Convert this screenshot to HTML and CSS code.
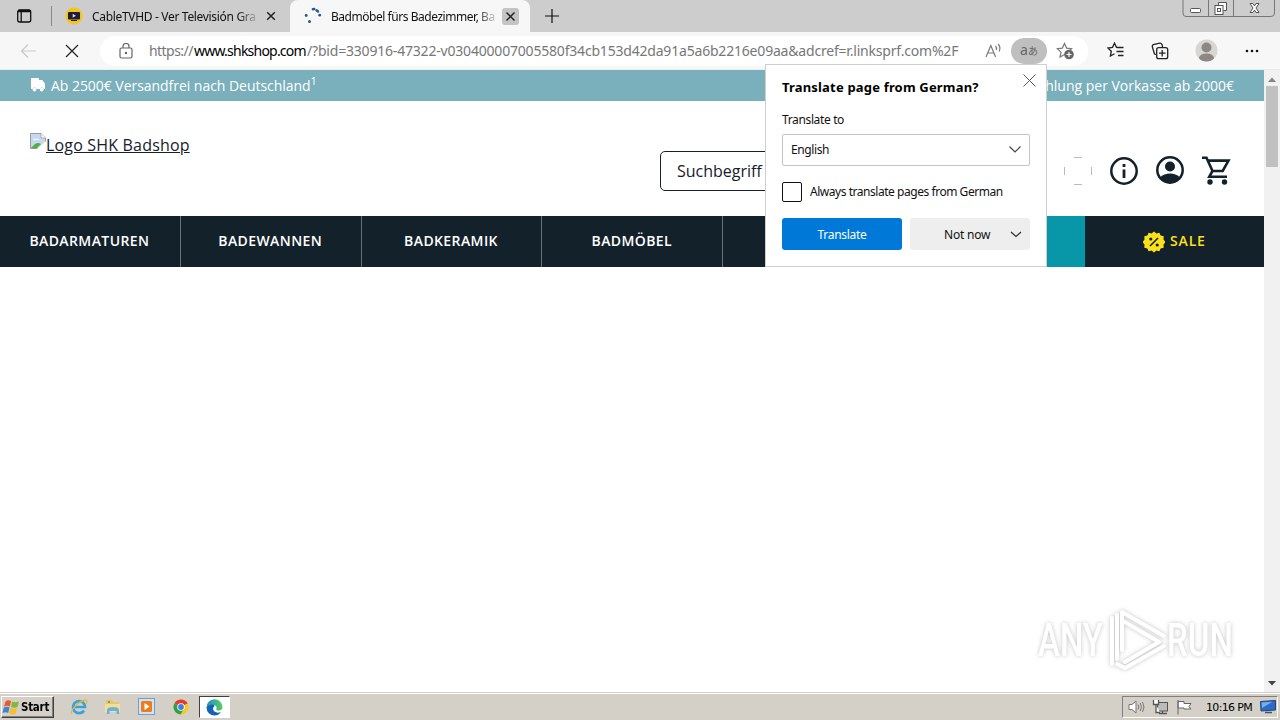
FILE: index.html
```html
<!DOCTYPE html>
<html lang="de">
<head>
<meta charset="utf-8">
<title>Badmöbel fürs Badezimmer</title>
<link rel="stylesheet" href="styles.css">
</head>
<body>
<div class="screen">
  <div class="tabstrip">
    <svg class="tab-actions" width="16" height="16" viewBox="0 0 16 16" fill="none" stroke="#111" stroke-width="1.3"><rect x="1.7" y="2" width="13" height="12" rx="2"/><path d="M2 3.6h12.5M5.2 4v10" /><path d="M2 2.8h12" stroke-width="2"/></svg>
    <span class="strip-line"></span>
    <div class="tab tab-idle">
      <svg width="18" height="18" viewBox="0 0 18 18"><circle cx="9" cy="9" r="8.5" fill="#f5c518"/><rect x="3" y="5" width="12" height="7.5" rx="1" fill="#1f1d3a"/><path d="M7.7 6.8v4l3.2-2z" fill="#d9d6ee"/><path d="M6 13.5h6" stroke="#1f1d3a"/></svg>
      <span class="tab-title t1">CableTVHD - Ver Televisión Gra</span>
      <svg class="close" width="16" height="16" viewBox="0 0 16 16" stroke="#222" stroke-width="1.5"><path d="M4.2 4.2l7.6 7.6M11.8 4.2l-7.6 7.6"/></svg>
    </div>
    <div class="tab tab-active">
      <svg width="18" height="18" viewBox="0 0 18 18" fill="#25598c"><circle cx="2.2" cy="8.5" r="1.4"/><circle cx="5.5" cy="14.5" r="1.5"/><circle cx="15.7" cy="8.2" r="1.4"/><path d="M8.8 2.2l1.4-.2M12.5 3.3l1.5 1.2" stroke="#25598c" stroke-width="2.4" stroke-linecap="round" fill="none"/></svg>
      <span class="tab-title t2">Badmöbel fürs Badezimmer, Ba</span>
      <svg class="close boxed" width="17" height="17" viewBox="0 0 17 17" stroke="#222" stroke-width="1.5"><path d="M4.5 4.5l8 8M12.5 4.5l-8 8"/></svg>
    </div>
    <svg class="plus" width="16" height="16" viewBox="0 0 16 16" stroke="#111" stroke-width="1.2"><path d="M8 1v14M1 8h14"/></svg>
    <svg class="winbtns" width="94" height="17" viewBox="0 0 94 17" fill="none" stroke="#555"><path d="M1 0v13q0 3.5 3 3.5h85q3.5 0 3.5-3.5V0M26.5 0v16M51.5 0v16" stroke="#777"/><rect x="8.5" y="8.5" width="10" height="4" rx="1" fill="#fff"/><path d="M36.5 5.5v-3h8v8h-3" fill="#fff"/><rect x="33" y="5.5" width="8" height="9" fill="#fff"/><rect x="35.5" y="8.5" width="3" height="3"/><path d="M68 3.5h3l1.5 2.5 1.5-2.5h3l-3 4.5 3 4.5h-3L72.5 10 71 12.5h-3l3-4.5z" fill="#fff"/></svg>
  </div>

  <div class="toolbar">
    <svg class="back" width="18" height="16" viewBox="0 0 18 16" fill="none" stroke="#c9c9c9" stroke-width="1.2"><path d="M16 8H1.5M8 1.5L1.5 8 8 14.5"/></svg>
    <svg class="stop" width="14" height="14" viewBox="0 0 14 14" stroke="#222" stroke-width="1.2"><path d="M1 1l12 12M13 1L1 13"/></svg>
    <div class="omnibox">
      <svg class="lock" width="14" height="16" viewBox="0 0 14 16" fill="none" stroke="#666" stroke-width="1.2"><rect x="1" y="5" width="12" height="10" rx="1.5"/><path d="M4 5V3.500a3 3 0 0 1 6 0V5"/><circle cx="7" cy="10" r=".6" fill="#666"/></svg>
      <div class="url"><span class="scheme">https://</span><span class="host">www.shkshop.com</span><span class="query">/?bid=330916-47322-v030400007005580f34cb153d42da91a5a6b2216e09aa&amp;adcref=r.linksprf.com%2F</span></div>
      <svg class="read" width="18" height="16" viewBox="0 0 18 16" fill="none" stroke="#777" stroke-width="1.2"><path d="M1 14L5.8 2.5 10.6 14M2.8 10h6M10.5 3q1.600 1.700.8 4M13.200 1q2.800 3 1 7.500"/></svg>
      <span class="trans">a<i>あ</i></span>
      <svg class="fav" width="20" height="18" viewBox="0 0 20 18"><path d="M8.500 1.500l2.100 4.600 5 .6-3.700 3.400 1 5-4.400-2.500L4 15.100l1-5L1.300 6.700l5-.6z" fill="none" stroke="#777" stroke-width="1.2"/><circle cx="13" cy="12.500" r="4.800" fill="#666"/><path d="M13 10v5M10.500 12.500h5" stroke="#fff" stroke-width="1.1"/></svg>
    </div>
    <svg class="favs" width="18" height="17" viewBox="0 0 18 17" fill="none" stroke="#222" stroke-width="1.3"><path d="M11 5.500L9.500 5.300 7.500 1.200 5.500 5.400l-4.600.6 3.400 3.200-.9 4.900 4.100-2.300M11 5.500h5.500M9.500 9.500h7M11 13.500h5.500"/></svg>
    <svg class="coll" width="18" height="18" viewBox="0 0 18 18" fill="none" stroke="#222" stroke-width="1.3"><rect x="5.700" y="5.700" width="11" height="11" rx="2"/><path d="M11.200 8v6.500M8 11.200h6.500M5 12.500L3.500 12 1.300 4.800Q1 3.300 2.300 2.700l6.500-1.500Q10.300 1 11 2.500l.6 2.500"/></svg>
    <svg class="avatar" width="23" height="23" viewBox="0 0 23 23"><defs><clipPath id="av"><circle cx="11.500" cy="11.500" r="11"/></clipPath></defs><g clip-path="url(#av)"><rect width="23" height="23" fill="#d8d5d2"/><circle cx="11.500" cy="8.500" r="5" fill="#8d8783"/><ellipse cx="11.500" cy="19" rx="7.500" ry="4.500" fill="#8d8783"/></g></svg>
    <svg class="dots" width="14" height="4" viewBox="0 0 14 4" fill="#111"><circle cx="2" cy="2" r="1.300"/><circle cx="7" cy="2" r="1.300"/><circle cx="12" cy="2" r="1.300"/></svg>
  </div>

  <div class="viewport">
    <main class="page">
      <div class="usp">
        <svg width="16" height="14" viewBox="0 0 16 14" fill="#fff"><path d="M1.500 0h7.300v2h3.400L15 5.500V11h-1.200a2.200 2.200 0 0 0-4.200 0H6.600a2.200 2.200 0 0 0-4.200 0H1V.5z"/><circle cx="4.500" cy="11.600" r="1.900"/><circle cx="11.700" cy="11.600" r="1.900"/></svg>
        <span class="usp-left">Ab 2500€ Versandfrei nach Deutschland<sup>1</sup></span>
        <span class="usp-right">hlung per Vorkasse ab 2000€</span>
      </div>
      <header class="head">
        <a class="logo"><svg width="16" height="16" viewBox="0 0 16 16"><path d="M.5.500H11L15.500 5v10.500H.5z" fill="#c6d8f2" stroke="#9a9a9a"/><path d="M11 .5V5h4.500" fill="#fff" stroke="#aaa"/><path d="M3 7q1-2 3-1 2-1 3 1z" fill="#fff"/><path d="M1 15l4-4q3-2 6 0l-4 4z" fill="#4fae45"/><path d="M7 16l9-8v8z" fill="#fff"/></svg><span>Logo SHK Badshop</span></a>
        <div class="search">Suchbegriff</div>
        <div class="head-icons">
          <svg width="28" height="28" viewBox="0 0 28 28" fill="none" stroke="#bbb" stroke-width="1"><path d="M10 .5h8M10 27.500h8M.5 10v8M27.500 10v8"/></svg>
          <svg width="28" height="28" viewBox="0 0 28 28" fill="none" stroke="#13212b" stroke-width="2.500"><circle cx="14" cy="14" r="12.700"/><path d="M14 12.500v8.500M14 7v3" stroke-width="2.800"/></svg>
          <svg width="28" height="28" viewBox="0 0 28 28"><circle cx="14" cy="14" r="12.700" fill="none" stroke="#13212b" stroke-width="2.500"/><circle cx="14" cy="10.500" r="5" fill="#13212b"/><path d="M4.500 21q3.500-3.500 9.500-3.500t9.500 3.500Q20 27 14 27t-9.500-6z" fill="#13212b"/></svg>
          <svg class="cart" width="30" height="29" viewBox="0 0 30 29" fill="none" stroke="#13212b" stroke-width="2.600"><path d="M1 1.800h4.500L11.500 15h10.200L27.500 4.600H7M11.500 15L8.300 20.700H26"/><circle cx="9" cy="26" r="2.700" fill="#13212b" stroke="none"/><circle cx="23.500" cy="26" r="2.700" fill="#13212b" stroke="none"/></svg>
        </div>
      </header>
      <nav class="nav">
        <a>BADARMATUREN</a><a>BADEWANNEN</a><a>BADKERAMIK</a><a>BADMÖBEL</a><a></a><a class="teal"></a>
        <a class="sale"><svg width="22" height="22" viewBox="0 0 22 22"><path fill="#fbe01c" d="M11 .5l2.400 2 3-.8 1.200 2.900 3.100.7-.2 3.200 2 2.500-2 2.500.2 3.200-3.100.7-1.200 2.900-3-.8-2.400 2-2.400-2-3 .8-1.200-2.900-3.100-.7.200-3.200-2-2.500 2-2.500-.2-3.200 3.100-.7 1.200-2.900 3 .8z"/><path d="M7 15l8-8" stroke="#13212b" stroke-width="1.600"/><circle cx="7.800" cy="8" r="1.600" fill="#13212b"/><circle cx="14.200" cy="14" r="1.600" fill="#13212b"/></svg><span>SALE</span></a>
      </nav>
    </main>
    <div class="scroll">
      <svg width="8" height="5" viewBox="0 0 8 5"><path d="M0 5l4-4.500L8 5z" fill="#858585"/></svg>
      <div class="thumb"></div>
      <svg class="down" width="8" height="5" viewBox="0 0 8 5"><path d="M0 0l4 4.500L8 0z" fill="#444"/></svg>
    </div>
  </div>

  <div class="taskbar">
    <div class="start"><svg width="19" height="17" viewBox="0 0 19 17"><path d="M3.500 2.500Q6 .5 9 2L7.800 7.500Q5 6 2 7.500z" fill="#e8592b"/><path d="M10 2.500q3 1.500 7 0l-1.500 5.500q-3.500 1.500-6.500 0z" fill="#83b93b"/><path d="M1.800 8.500q3-1.500 5.800 0L6.200 14Q3.500 12.500.5 14z" fill="#3f84cf"/><path d="M8.700 9q3 1.500 6.500 0l-1.400 5.500q-3.500 1.700-6.500 0z" fill="#f6bf2c"/></svg><b>Start</b></div>
    <svg class="ie" width="18" height="18" viewBox="0 0 18 18" fill="none"><path d="M14 12.500A6 6 0 1 1 15 9H4" stroke="#39a3e0" stroke-width="2.700"/><path d="M2 16C-1 13 10 2 16 2q2 1 0 4" stroke="#e5b93a" stroke-width="1.300"/></svg>
    <svg class="folder" width="18" height="18" viewBox="0 0 18 18"><path d="M2 2h6l1 2h6v9H2z" fill="#e9c766"/><path d="M1 6h15v8H1z" fill="#f5df93"/><path d="M3 16v-4q0-3 6-3t6 3v4h-2.500v-3h-7v3z" fill="#69b2df"/><path d="M4 3h2v2H4z" fill="#65a955"/></svg>
    <svg class="media" width="17" height="17" viewBox="0 0 17 17"><rect x=".5" y=".5" width="16" height="16" fill="#cfe3f7" stroke="#6e9fcd"/><rect x="3" y="3" width="11" height="11" rx="1.500" fill="#ee7d17"/><path d="M6.500 5v7l5-3.500z" fill="#fff"/></svg>
    <svg class="chrome" width="16" height="16" viewBox="0 0 16 16"><circle cx="8" cy="8" r="7.500" fill="#f9c91c"/><path d="M8 8L1.500 4.200A7.500 7.500 0 0 1 14.500 4.200z" fill="#e33b2e"/><path d="M8 8L1.500 4.200A7.500 7.500 0 0 0 7.500 15.500L11 9.500z" fill="#2da24b"/><path d="M8 4.500h6.600L13 3 8 2z" fill="#e33b2e"/><circle cx="8" cy="8" r="3.800" fill="#fff"/><circle cx="8" cy="8" r="2.900" fill="#3f7de8"/></svg>
    <div class="edge-btn"><svg width="17" height="17" viewBox="0 0 17 17"><defs><linearGradient id="eg"><stop offset="0" stop-color="#1f8fd6"/><stop offset="1" stop-color="#58cf55"/></linearGradient></defs><path d="M.5 8.500A8 8 0 0 1 16.500 8q0 3.500-4 3.500-3 0-2-2 .5-3-2.500-3.500-4-.5-7.500 2.500z" fill="url(#eg)"/><path d="M.5 8.500Q3 5 6.500 5.500 9 6 8.500 7q-3 3 0 5.500 2.500 2 6.500.5-2.500 3.500-6.500 3.500a8 8 0 0 1-8-8z" fill="#1263b4"/></svg></div>
    <div class="tray">
      <svg width="17" height="16" viewBox="0 0 17 16" fill="#fff" stroke="#777"><path d="M1 5.500h3L8 2v12l-4-3.500H1z"/><path d="M10 5.500q1.500 2.500 0 5M12.200 4q2.500 4 0 8M14.500 3q3 5 0 10" fill="none"/></svg>
      <svg width="17" height="16" viewBox="0 0 17 16" fill="#fff" stroke="#555"><rect x="5.500" y="3.500" width="10" height="8.500" fill="#bbb"/><path d="M7 14.500h8M10.500 12v2.500M1.500 1v4.500h5V1M4 5.500V13.500h4" stroke-width="1.300"/></svg>
      <svg width="17" height="16" viewBox="0 0 17 16" fill="#fff" stroke="#666"><path d="M2 1v14.500M2 2.500h6v2h7l-2 3 2 2.500H8V9H2z"/></svg>
      <span class="clock">10:16 PM</span>
      <svg width="16" height="14" viewBox="0 0 16 14"><path d="M.5 1.500L15.500.5v9.500L1 11z" fill="#2c6cc9" stroke="#27456f"/><path d="M1.500 2.500l11-.8L2 8z" fill="#74aef0"/><path d="M5 12.500h7" stroke="#3f546e" stroke-width="1.500"/></svg>
    </div>
  </div>

  <section class="popup">
    <div class="pop-head"><h1>Translate page from German?</h1><svg width="13" height="13" viewBox="0 0 13 13" stroke="#555"><path d="M.5.500l12 12M12.500.5l-12 12"/></svg></div>
    <label class="to">Translate to</label>
    <div class="select"><span>English</span><svg width="12" height="7" viewBox="0 0 12 7" fill="none" stroke="#444" stroke-width="1.200"><path d="M.5.500L6 6 11.500.5"/></svg></div>
    <div class="always"><span class="box"></span><span class="always-text">Always translate pages from German</span></div>
    <div class="btns"><button class="primary">Translate</button><button class="second"><span>Not now</span><svg width="12" height="7" viewBox="0 0 12 7" fill="none" stroke="#333" stroke-width="1.300"><path d="M1 1l5 4.500L11 1"/></svg></button></div>
  </section>

  <svg class="watermark" width="225" height="74" viewBox="0 0 225 74">
    <g class="wm-shape">
      <text x="7" y="52" textLength="65" lengthAdjust="spacingAndGlyphs">ANY</text>
      <text x="136" y="52" textLength="66" lengthAdjust="spacingAndGlyphs">RUN</text>
      <path d="M81 14v46M86 11v44M91 8v38M91 8l42 24M92 17l36 21-34 20M133 42L94 64M86 60l8 4" fill="none" stroke="#fff" stroke-width="4" stroke-linejoin="round" stroke-linecap="round"/>
    </g>
  </svg>
</div>
</body>
</html>
```

FILE: styles.css
```css
* { box-sizing: border-box; }
body { margin: 0; font-family: "Noto Sans", "Open Sans", sans-serif; }
svg { display: block; flex: none; }
.screen { position: relative; width: 1280px; height: 720px; overflow: hidden; background: #fff; display: flex; flex-direction: column; }

.tabstrip { height: 32px; background: #cdcdcd; display: flex; align-items: center; flex: none; }
.tab-actions { margin-left: 16px; }
.strip-line { width: 1px; height: 20px; background: #888; margin-left: 19px; }
.tab { height: 32px; display: flex; align-items: center; font-size: 12px; color: #111; }
.tab-idle { width: 238px; padding-left: 13px; }
.tab-active { width: 240px; padding-left: 14px; background: #f7f7f7; border-radius: 8px 8px 0 0; }
.tab-title { white-space: nowrap; -webkit-mask-image: linear-gradient(90deg, #000 88%, transparent 102%); mask-image: linear-gradient(90deg, #000 88%, transparent 102%); }
.t1 { width: 165px; margin-left: 9px; letter-spacing: -0.32px; }
.t2 { width: 165px; margin-left: 9px; letter-spacing: -0.46px; }
.close { margin-left: 6px; }
.boxed { background: #c4c4c4; border-radius: 3px; }
.plus { margin-left: 14px; }
.winbtns { margin-left: auto; margin-right: 4px; align-self: flex-start; }

.toolbar { height: 38px; background: #f7f7f7; border-bottom: 1px solid #ededed; display: flex; align-items: center; flex: none; }
.back { margin-left: 20px; }
.stop { margin-left: 27px; }
.omnibox { margin-left: 21px; width: 988px; height: 30px; border-radius: 15px; background: #fff; display: flex; align-items: center; }
.lock { margin-left: 19px; }
.url { margin-left: 16px; width: 815px; white-space: nowrap; font-size: 14px; color: #777; display: flex; }
.scheme { width: 45px; letter-spacing: -0.55px; }
.host { width: 113px; letter-spacing: -0.78px; color: #000; }
.query { letter-spacing: -0.195px; }
.read { margin-left: 21px; }
.trans { margin-left: 8px; width: 36px; height: 26px; border-radius: 13px; background: #bfbfbf; color: #666; font-size: 14px; line-height: 24px; text-align: center; }
.trans i { font: normal 10px "Noto Sans CJK JP", sans-serif; }
.fav { margin-left: 9px; }
.favs { margin-left: 19px; }
.coll { margin-left: 26px; }
.avatar { margin-left: 26px; }
.dots { margin-left: 27px; }

.viewport { height: 622px; display: flex; flex: none; }
.page { width: 1264px; color: #13212b; font-family: "Open Sans", "Noto Sans", sans-serif; }
.usp { height: 31px; background: #7aafbc; color: #fff; display: flex; align-items: center; padding: 0 30px 1px; font-size: 14px; }
.usp-left { margin-left: 5px; white-space: nowrap; letter-spacing: -0.04px; }
.usp sup { font-size: 11px; line-height: 0; }
.usp-right { margin-left: auto; white-space: nowrap; }
.head { height: 115px; display: flex; padding-left: 30px; }
.logo { display: flex; width: 630px; padding-top: 32px; font-size: 16px; letter-spacing: 0.18px; }
.logo span { text-decoration: underline; line-height: 25px; white-space: nowrap; }
.search { margin-top: 50px; width: 362px; height: 40px; border: 1px solid #13212b; border-radius: 5px; padding-left: 16px; line-height: 38px; font-size: 16px; }
.head-icons { margin-left: 42px; margin-top: 55px; display: flex; gap: 18px; }
.head-icons svg:nth-child(-n+2) { margin-top: 1px; }
.head-icons .cart { margin-left: -1px; }
.nav { height: 51px; background: #13212b; color: #fff; display: grid; grid-template-columns: repeat(6, 180.8px) 1fr; font-size: 14px; font-weight: 600; letter-spacing: 0.4px; }
.nav a { display: flex; align-items: center; justify-content: center; border-right: 1px solid #67737b; padding: 0 1px 2px 0; }
.nav .teal { background: #0797a8; border: 0; }
.nav .sale { border: 0; color: #fbe01c; gap: 5px; padding: 0; }
.sale span { margin-top: -2px; letter-spacing: 0.8px; }
.scroll { width: 16px; background: #f1f1f1; display: flex; flex-direction: column; align-items: center; padding-top: 7px; }
.thumb { width: 12px; height: 81px; margin-top: 4px; background: #c1c1c1; }
.down { margin-top: auto; margin-bottom: 6px; }

.taskbar { height: 28px; background: #d4d0c8; border-top: 1px solid #d4d0c8; box-shadow: inset 0 1px #fff; display: flex; align-items: center; flex: none; }
.start { width: 53px; height: 22px; margin-left: 1px; margin-top: 1px; border: 1px solid; border-color: #fff #404040 #404040 #fff; box-shadow: inset -1px -1px #808080; display: flex; align-items: center; font-size: 12px; letter-spacing: -0.3px; font-family: "DejaVu Sans", sans-serif; }
.start b { transform-origin: left; transform: scaleX(.86); }
.ie { margin-left: 16px; }
.folder { margin-left: 16px; }
.media { margin-left: 16px; }
.chrome { margin-left: 18px; }
.edge-btn { width: 31px; height: 22px; margin-left: 10px; margin-top: 1px; background: #fff; border: 1px solid; border-color: #404040 #fff #fff #404040; display: flex; align-items: center; justify-content: center; }
.tray { margin-left: auto; margin-right: 2px; margin-top: 1px; width: 156px; height: 22px; border: 1px solid; border-color: #808080 #fff #fff #808080; display: flex; align-items: center; padding-left: 5px; gap: 7px; }
.clock { width: 47px; margin-left: 6px; font: 11px "DejaVu Sans", sans-serif; letter-spacing: -0.65px; white-space: nowrap; }

.popup { position: absolute; left: 765px; top: 64px; width: 282px; height: 203px; background: #fff; border: 1px solid #cfcfcf; padding: 0 16px; font-size: 12px; color: #111; }
.pop-head { display: flex; height: 45px; }
.pop-head h1 { margin: 12px 0 0; font-size: 13px; line-height: 20px; color: #000; white-space: nowrap; letter-spacing: 0.18px; }
.pop-head svg { margin: 9px -6px 0 auto; }
.to { display: block; height: 24px; line-height: 20px; letter-spacing: -0.36px; }
.select { width: 248px; height: 32px; border: 1px solid #c4c4c4; border-radius: 2px; display: flex; align-items: center; justify-content: space-between; padding: 0 8px 1px; letter-spacing: -0.4px; }
.always { display: flex; align-items: center; margin-top: 16px; height: 20px; gap: 8px; white-space: nowrap; letter-spacing: -0.46px; }
.always-text { margin-top: -1px; }
.box { width: 20px; height: 20px; border: 1px solid #111; border-radius: 2px; }
.btns { display: flex; gap: 8px; margin-top: 16px; }
.btns button { width: 120px; height: 32px; border: 0; border-radius: 3px; padding: 0; font: 12px "Noto Sans", sans-serif; letter-spacing: -0.3px; }
.btns .primary { background: #0078d7; color: #fff; }
.btns .second { background: #eee; color: #111; display: flex; align-items: center; padding: 0 8px 0 34px; justify-content: space-between; letter-spacing: -0.2px; }

.watermark { position: absolute; left: 1031px; top: 604px; opacity: .85; }
.wm-shape { filter: drop-shadow(0 0 2px #b8b8b8); }
.watermark text { font: 500 46px Roboto, sans-serif; fill: #fff; }
```
